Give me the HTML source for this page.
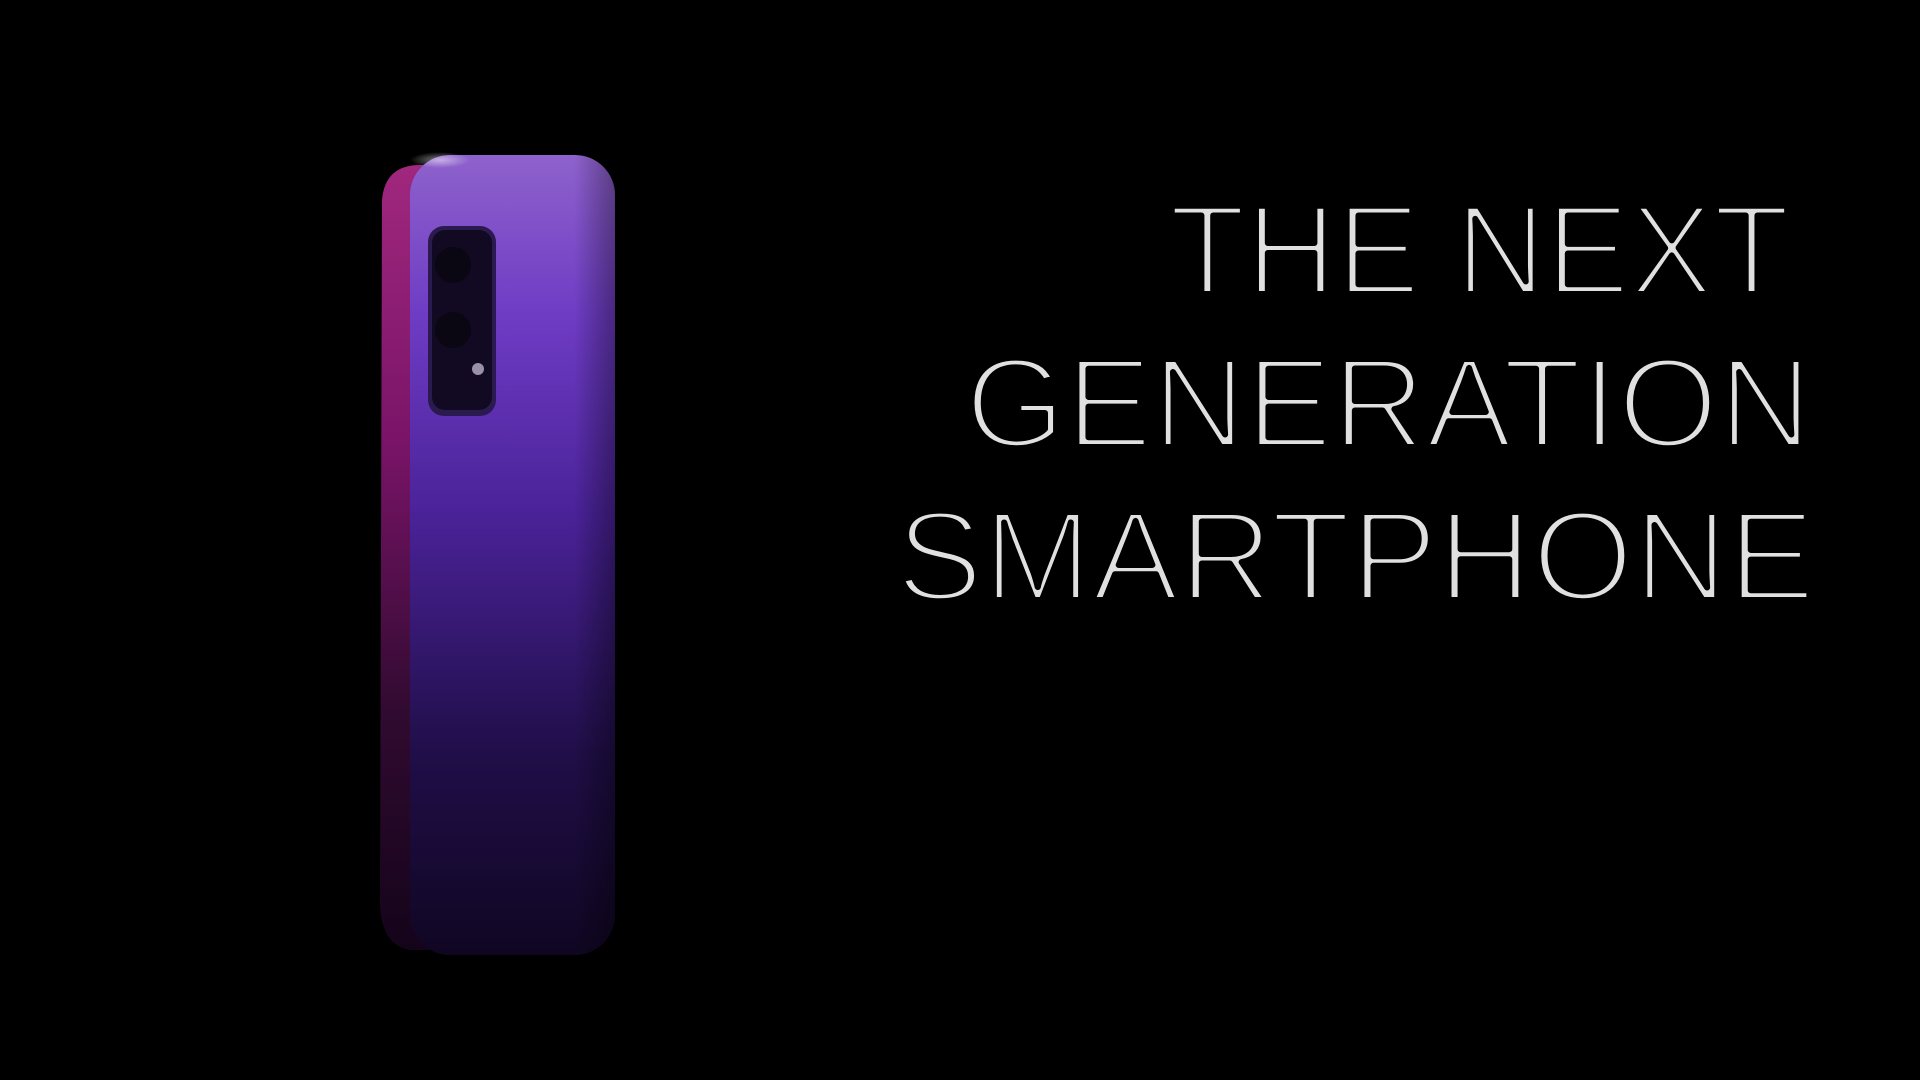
<!DOCTYPE html>
<html><head><meta charset="utf-8"><style>
html,body{margin:0;padding:0;background:#000;width:1920px;height:1080px;overflow:hidden}
</style></head><body>
<svg width="1920" height="1080" viewBox="0 0 1920 1080" xmlns="http://www.w3.org/2000/svg">
<defs>
<linearGradient id="side" x1="0" y1="0" x2="0" y2="1">
<stop offset="0" stop-color="#a0287e"/><stop offset="0.35" stop-color="#7a1468"/><stop offset="0.7" stop-color="#300a30"/><stop offset="1" stop-color="#14041a"/></linearGradient>
<linearGradient id="back" x1="0" y1="0" x2="0" y2="1">
<stop offset="0" stop-color="#8e62cc"/><stop offset="0.2" stop-color="#6e3cc4"/><stop offset="0.45" stop-color="#4a2298"/><stop offset="0.75" stop-color="#200e48"/><stop offset="1" stop-color="#100622"/></linearGradient>
<linearGradient id="shade" x1="0" y1="0" x2="1" y2="0">
<stop offset="0" stop-color="#000" stop-opacity="0"/><stop offset="0.8" stop-color="#000" stop-opacity="0"/><stop offset="1" stop-color="#000" stop-opacity="0.35"/></linearGradient>
<radialGradient id="glow" cx="0.5" cy="0.5" r="0.5"><stop offset="0" stop-color="#fff" stop-opacity="0.5"/><stop offset="1" stop-color="#fff" stop-opacity="0"/></radialGradient>
</defs>
<rect width="1920" height="1080" fill="#000"/>
<path d="M420,165 Q385,165 382,200 L380,900 Q380,945 410,950 L430,950 L430,165 Z" fill="url(#side)"/>
<rect x="410" y="155" width="205" height="800" rx="40" fill="url(#back)"/>
<rect x="410" y="155" width="205" height="800" rx="40" fill="url(#shade)"/>
<ellipse cx="440" cy="160" rx="30" ry="8" fill="url(#glow)"/>
<rect x="428" y="226" width="68" height="190" rx="16" fill="#2a1a50"/>
<rect x="432" y="230" width="60" height="180" rx="13" fill="#120a22"/>
<circle cx="453" cy="265" r="18" fill="#0a0612"/>
<circle cx="453" cy="330" r="18" fill="#0a0612"/>
<circle cx="478" cy="369" r="6" fill="#9a90a8"/>
<g fill="#e0e0e0" stroke="#000" stroke-width="6" stroke-linejoin="round" font-family="Liberation Sans, sans-serif" font-size="128">
<text x="1169" y="294" textLength="621" lengthAdjust="spacingAndGlyphs">THE NEXT</text>
<text x="965" y="447" textLength="847" lengthAdjust="spacingAndGlyphs">GENERATION</text>
<text x="896" y="600" textLength="919" lengthAdjust="spacingAndGlyphs">SMARTPHONE</text>
</g>
</svg>
</body></html>
